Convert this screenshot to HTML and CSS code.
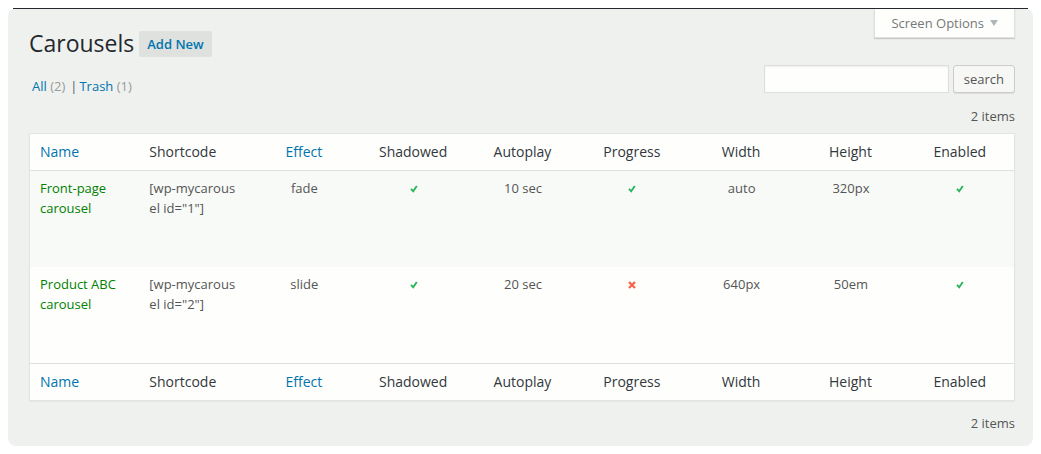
FILE: index.html
```html
<!DOCTYPE html>
<html lang="en">
<head>
<meta charset="utf-8">
<title>Carousels</title>
<link rel="stylesheet" href="styles.css">
</head>
<body>
<svg width="0" height="0" class="defs" aria-hidden="true">
  <symbol id="check" viewBox="0 0 8 8"><path d="M1 3.8 3.2 6.3 6.8 1" fill="none" stroke="#2bb55a" stroke-width="1.9"/></symbol>
  <symbol id="cross" viewBox="0 0 8 8"><path d="M1 1 7 7M7 1 1 7" fill="none" stroke="#f9644a" stroke-width="2.3"/></symbol>
</svg>
<main class="panel">
  <div class="topline"></div>
  <div class="content">
    <header class="head">
      <h1 class="title">Carousels</h1>
      <a class="add-new" href="#">Add New</a>
      <button class="screen-options" type="button">Screen Options <svg class="caret" width="8" height="6" viewBox="0 0 8 6" aria-hidden="true"><path d="M0 0h8L4 6z" fill="#b0b6b8"/></svg></button>
    </header>
    <div class="tools">
      <nav class="filters"><a href="#">All</a> <span class="count">(2)</span><span class="sep">|</span><a href="#">Trash</a> <span class="count">(1)</span></nav>
      <form class="search">
        <input class="search-box" type="text" aria-label="Search carousels">
        <button class="search-button" type="button">search</button>
      </form>
    </div>
    <p class="items items-top">2 items</p>
    <table class="list">
      <thead>
        <tr><th><a href="#">Name</a></th><th>Shortcode</th><th><a href="#">Effect</a></th><th>Shadowed</th><th>Autoplay</th><th>Progress</th><th>Width</th><th>Height</th><th>Enabled</th></tr>
      </thead>
      <tbody>
        <tr>
          <td><a class="name" href="#">Front-page carousel</a></td><td class="code">[wp-mycarousel id="1"]</td><td>fade</td>
          <td><svg class="mark" role="img" aria-label="yes"><use href="#check"/></svg></td><td>10 sec</td>
          <td><svg class="mark" role="img" aria-label="yes"><use href="#check"/></svg></td><td>auto</td><td>320px</td>
          <td><svg class="mark" role="img" aria-label="yes"><use href="#check"/></svg></td>
        </tr>
        <tr>
          <td><a class="name" href="#">Product ABC carousel</a></td><td class="code">[wp-mycarousel id="2"]</td><td>slide</td>
          <td><svg class="mark" role="img" aria-label="yes"><use href="#check"/></svg></td><td>20 sec</td>
          <td><svg class="mark" role="img" aria-label="no"><use href="#cross"/></svg></td><td>640px</td><td>50em</td>
          <td><svg class="mark" role="img" aria-label="yes"><use href="#check"/></svg></td>
        </tr>
      </tbody>
      <tfoot>
        <tr><th><a href="#">Name</a></th><th>Shortcode</th><th><a href="#">Effect</a></th><th>Shadowed</th><th>Autoplay</th><th>Progress</th><th>Width</th><th>Height</th><th>Enabled</th></tr>
      </tfoot>
    </table>
    <p class="items items-bottom">2 items</p>
  </div>
</main>
</body>
</html>
```
FILE: styles.css
```css
* { box-sizing: border-box; }
body {
  margin: 8px;
  background: #fff;
  color: #555;
  font: 13px/20px "Open Sans", "Noto Sans", sans-serif;
}
a { color: #0074ae; text-decoration: none; }
.defs { position: absolute; }
.panel { background: #eff1ef; border-radius: 8px; }
.topline { height: 1px; margin: 0 5px; background: #23282d; }
.content { padding: 0 18px 13px 21px; }
.head { display: flex; align-items: flex-start; }
.title {
  margin: 19px 5px 0 0;
  color: #23282d;
  font-size: 23px;
  font-weight: 400;
  line-height: 30px;
}
.add-new {
  margin-top: 22px;
  padding: 3px 8px;
  border-radius: 2px;
  background: #dfe1df;
  font-weight: 600;
}
.screen-options {
  display: flex;
  align-items: center;
  gap: 6px;
  height: 29px;
  margin-left: auto;
  padding: 0 16px;
  border: 1px solid #dfe1df;
  border-top: 0;
  background: #fefffd;
  box-shadow: 0 1px 1px #c9cbc9;
  color: #777;
  font: inherit;
}
.tools {
  display: flex;
  align-items: center;
  justify-content: space-between;
  margin-top: 4px;
}
.filters { padding: 14px 3px 0; }
.count { color: #999; }
.sep { margin: 0 2px 0 5px; }
.search { display: flex; gap: 4px; }
.search-box {
  width: 185px;
  height: 28px;
  padding: 3px 5px;
  border: 1px solid #dddfdd;
  background: #fefffd;
  box-shadow: inset 0 1px 2px rgba(0, 0, 0, 0.07);
  font: inherit;
}
.search-button {
  height: 28px;
  padding: 0 10px;
  border: 1px solid #ccc;
  border-radius: 3px;
  background: #f7f8f6;
  box-shadow: 0 1px 0 rgba(0, 0, 0, 0.08);
  color: #555;
  font: inherit;
}
.items { margin: 0; text-align: right; }
.items-top { padding: 10px 0 7px; }
.items-bottom { padding-top: 12px; }
.list {
  width: 100%;
  table-layout: fixed;
  border: 1px solid #e2e4e2;
  border-spacing: 0;
  background: #fefffd;
  box-shadow: 0 1px 1px rgba(0, 0, 0, 0.04);
}
.list th {
  padding: 8px 0 8px 1px;
  color: #32373c;
  font-size: 14px;
  font-weight: 400;
  text-align: center;
}
.list thead th { border-bottom: 1px solid #dfe1df; }
.list tfoot th { border-top: 1px solid #dfe1df; }
.list td {
  height: 96px;
  padding: 7px 0 8px 2px;
  text-align: center;
  vertical-align: top;
}
.list tr > :nth-child(-n+2) { padding-left: 10px; padding-right: 10px; text-align: left; }
.list tbody tr:first-child { background: #f8faf8; }
.name { color: #008000; }
.code { word-break: break-all; }
.mark { width: 8px; height: 8px; }
```
